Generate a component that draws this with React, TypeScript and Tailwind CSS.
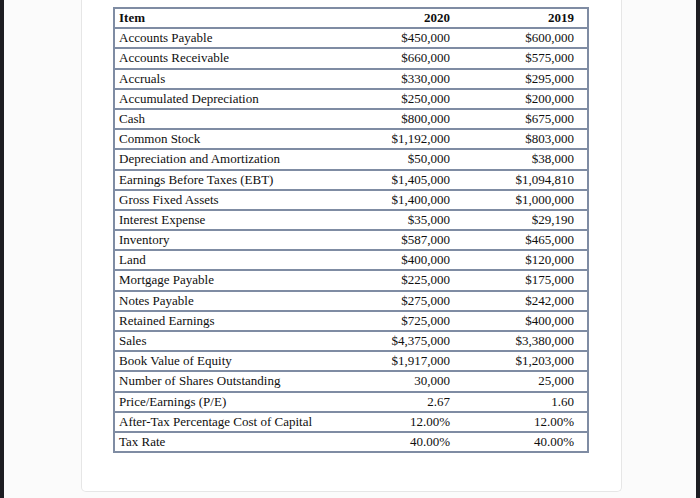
import React from "react";

const rows: [string, string, string][] = [
  ["Accounts Payable", "$450,000", "$600,000"],
  ["Accounts Receivable", "$660,000", "$575,000"],
  ["Accruals", "$330,000", "$295,000"],
  ["Accumulated Depreciation", "$250,000", "$200,000"],
  ["Cash", "$800,000", "$675,000"],
  ["Common Stock", "$1,192,000", "$803,000"],
  ["Depreciation and Amortization", "$50,000", "$38,000"],
  ["Earnings Before Taxes (EBT)", "$1,405,000", "$1,094,810"],
  ["Gross Fixed Assets", "$1,400,000", "$1,000,000"],
  ["Interest Expense", "$35,000", "$29,190"],
  ["Inventory", "$587,000", "$465,000"],
  ["Land", "$400,000", "$120,000"],
  ["Mortgage Payable", "$225,000", "$175,000"],
  ["Notes Payable", "$275,000", "$242,000"],
  ["Retained Earnings", "$725,000", "$400,000"],
  ["Sales", "$4,375,000", "$3,380,000"],
  ["Book Value of Equity", "$1,917,000", "$1,203,000"],
  ["Number of Shares Outstanding", "30,000", "25,000"],
  ["Price/Earnings (P/E)", "2.67", "1.60"],
  ["After-Tax Percentage Cost of Capital", "12.00%", "12.00%"],
  ["Tax Rate", "40.00%", "40.00%"],
];

function Row({ cells, bold }: { cells: [string, string, string]; bold?: boolean }) {
  return (
    <div
      className={`grid grid-cols-[215px_134px_123px] h-[20.2px] border-b-2 border-[#7f8ca3] leading-[18.6px] text-[13px] text-[#0f0f0f] ${
        bold ? "font-bold" : ""
      }`}
    >
      <div className="pl-[4px] whitespace-nowrap">{cells[0]}</div>
      <div className="pr-[14px] text-right whitespace-nowrap">{cells[1]}</div>
      <div className="pr-[13px] text-right whitespace-nowrap">{cells[2]}</div>
    </div>
  );
}

export default function App() {
  return (
    <div
      className="flex w-[700px] h-[498px] bg-[#fbfbfb] overflow-hidden"
      style={{ fontFamily: '"Liberation Serif", "Times New Roman", serif' }}
    >
      <div className="w-[4px] h-full bg-[#1d1d22]" />
      <div className="flex-1 h-full">
        <div className="ml-[77px] w-[541px] h-[492px] bg-white border border-t-0 border-[#e6e6e6] rounded-b-[5px] pl-[31px] pt-[7px]">
          <div className="w-[476px] border-2 border-b-0 border-[#7f8ca3]">
            <Row cells={["Item", "2020", "2019"]} bold />
            {rows.map((r) => (
              <Row key={r[0]} cells={r} />
            ))}
          </div>
        </div>
      </div>
      <div className="w-[4px] h-full bg-[#1d1d22]" />
    </div>
  );
}
